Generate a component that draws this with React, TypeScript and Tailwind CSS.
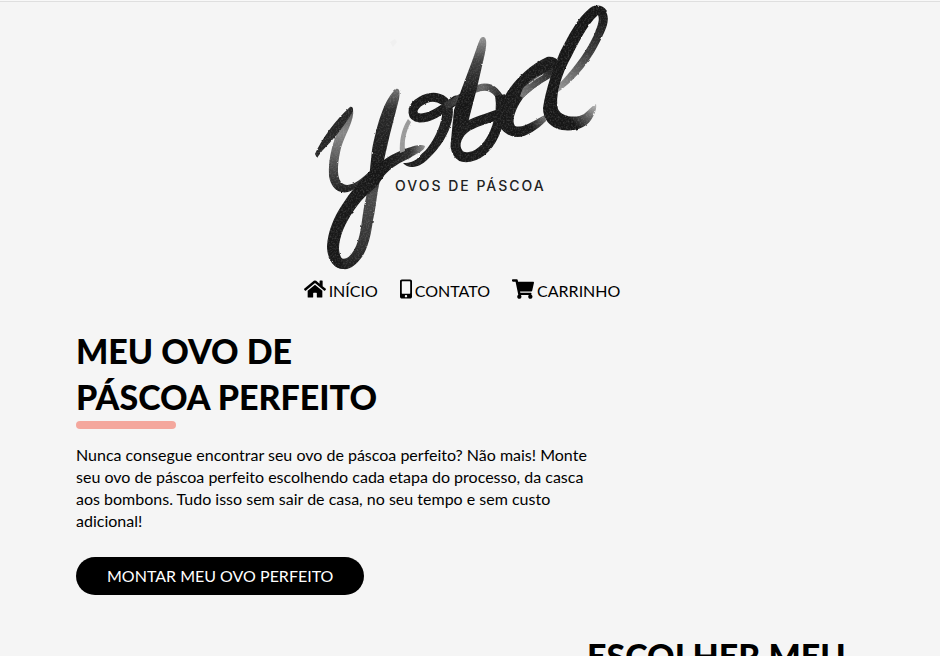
import { FaHome, FaMobileAlt, FaShoppingCart } from "react-icons/fa";

function Logo() {
  return (
    <svg viewBox="310 2 304 272" className="block h-[272px] w-[304px]" role="img" aria-label="Yobel ovos de páscoa">
      <defs>
        <filter id="brush" x="-5%" y="-5%" width="110%" height="110%" colorInterpolationFilters="sRGB">
          <feTurbulence type="fractalNoise" baseFrequency="0.25" numOctaves="2" seed="4" result="noise" />
          <feDisplacementMap in="SourceGraphic" in2="noise" scale="2" xChannelSelector="R" yChannelSelector="G" result="rough" />
          <feTurbulence type="fractalNoise" baseFrequency="0.6" numOctaves="2" seed="9" />
          <feColorMatrix type="matrix" values="0 0 0 0 0.8  0 0 0 0 0.8  0 0 0 0 0.8  0.5 0 0 0 -0.22" result="grain" />
          <feComposite in="grain" in2="rough" operator="atop" />
        </filter>
        <linearGradient id="hook" x1="0" y1="108" x2="0" y2="192" gradientUnits="userSpaceOnUse">
          <stop offset="0" stopColor="#555" />
          <stop offset="0.3" stopColor="#888" />
          <stop offset="0.7" stopColor="#4a4a4a" />
          <stop offset="1" stopColor="#1c1c1c" />
        </linearGradient>
        <linearGradient id="stem" x1="0" y1="88" x2="0" y2="270" gradientUnits="userSpaceOnUse">
          <stop offset="0" stopColor="#777" />
          <stop offset="0.12" stopColor="#2a2a2a" />
          <stop offset="0.45" stopColor="#161616" />
          <stop offset="0.58" stopColor="#4c4c4c" />
          <stop offset="0.85" stopColor="#333" />
          <stop offset="1" stopColor="#1c1c1c" />
        </linearGradient>
        <linearGradient id="sweep" x1="385" y1="0" x2="426" y2="0" gradientUnits="userSpaceOnUse">
          <stop offset="0" stopColor="#161616" />
          <stop offset="0.6" stopColor="#2c2c2c" />
          <stop offset="1" stopColor="#999" />
        </linearGradient>
        <linearGradient id="bstem" x1="0" y1="36" x2="0" y2="95" gradientUnits="userSpaceOnUse">
          <stop offset="0" stopColor="#999" />
          <stop offset="0.4" stopColor="#444" />
          <stop offset="1" stopColor="#161616" />
        </linearGradient>
        <linearGradient id="btop" x1="450" y1="0" x2="504" y2="0" gradientUnits="userSpaceOnUse">
          <stop offset="0" stopColor="#333" />
          <stop offset="0.6" stopColor="#666" />
          <stop offset="1" stopColor="#1c1c1c" />
        </linearGradient>
        <radialGradient id="abody" cx="546" cy="117" r="18" gradientUnits="userSpaceOnUse">
          <stop offset="0" stopColor="#777" />
          <stop offset="1" stopColor="#181818" />
        </radialGradient>
        <linearGradient id="ainner" x1="523" y1="96" x2="552" y2="72" gradientUnits="userSpaceOnUse">
          <stop offset="0" stopColor="#777" />
          <stop offset="1" stopColor="#262626" />
        </linearGradient>
        <linearGradient id="lback" x1="604" y1="15" x2="558" y2="92" gradientUnits="userSpaceOnUse">
          <stop offset="0" stopColor="#181818" />
          <stop offset="0.45" stopColor="#3c3c3c" />
          <stop offset="1" stopColor="#999" />
        </linearGradient>
        <radialGradient id="lmain" cx="598" cy="103" r="32" gradientUnits="userSpaceOnUse">
          <stop offset="0" stopColor="#ccc" />
          <stop offset="0.5" stopColor="#666" />
          <stop offset="1" stopColor="#161616" />
        </radialGradient>
      </defs>
      <path d="M390 42l5-3 2 3-4 5z" fill="#f0f0f0" />
      <g filter="url(#brush)">
        <path d="M353 109C355 120 345 134 341 148C338 160 336 176 341 182C348 190 360 180 369 172C364 183 355 190 348 192C338 194 331 188 329 176C328 158 333 136 346 116Z" fill="url(#hook)" />
        <path d="M350 107C353 106 354 110 352 113C343 128 332 141 322 151L317 158L315 154C321 140 336 119 350 107Z" fill="#252525" />
        <path d="M396 89C400 88 400 93 399 99L390 134L384 160L378 190C376 202 375 212 373 220C371 235 368 248 362 257C356 265 350 270 343 269C337 269 333 265 330 260L337 255C344 263 350 257 354 250C361 238 361 224 364 207L368 188L372 150C377 125 384 99 396 89Z" fill="url(#stem)" />
        <path d="M343 269C333 268 327 258 327 246C328 231 334 217 342 205C350 192 360 181 371 170L384 160L384 176C377 188 370 191 361 201C352 212 343 226 340 240C338 249 339 255 343 260Z" fill="#181818" />
        <path d="M370 172C380 162 388 156 400 151C410 147 420 143 425 146C425 151 415 154 410 158C400 163 392 166 382 178L374 188Z" fill="url(#sweep)" />
        <path d="M408 119C402 128 399 140 400 153L405 151C404 140 406 131 411 122Z" fill="#999" />
        <path d="M456 100C444 108 432 118 420 118C411 117 411 109 418 103C426 97 436 95 444 101" fill="none" stroke="#181818" strokeWidth="9" strokeLinecap="round" />
        <path d="M442 97C454 98 454 112 452 120C449 134 440 148 428 159C418 169 408 169 403 163C418 163 419 155 425 151C433 142 440 128 442 116Z" fill="#1c1c1c" />
        <path d="M445 106C459 101 466 91 479 88C493 84 501 95 502 107" fill="none" stroke="url(#btop)" strokeWidth="7" />
        <path d="M483 37C488 37 486 48 485 53L477 88L471 111L466 131L457 148L451 140L454 110C461 90 471 65 477 47C479 42 480 37 483 37Z" fill="url(#bstem)" />
        <path d="M500 95C504 118 493 140 485 148C476 158 462 160 458 153C452 144 458 132 468 126C480 119 492 118 506 111" fill="none" stroke="#181818" strokeWidth="10" />
        <path d="M501 104C508 86 527 66 547 57C552 56 557 58 560 62L556 74C545 80 530 90 523 98C516 108 511 120 515 126C524 129 536 119 545 115L546 121C538 129 527 137 517 137C508 136 502 132 499 124Z" fill="url(#abody)" />
        <path d="M554 69C542 72 532 79 523 88L520 96L523 98C531 90 544 81 554 76Z" fill="url(#ainner)" />
        <path d="M529 84Q536 78 544 74" fill="none" stroke="#ccc" strokeWidth="1" />
        <path d="M602 8C612 14 607 27 603 35C593 58 576 80 558 92L560 83C577 65 588 48 594 35C598 25 600 20 598 15Z" fill="url(#lback)" />
        <path d="M607 11C603 5 596 4 590 8C577 18 568 37 560 52C553 69 546 88 543 108C543 119 550 128 562 130C576 132 586 127 591 120C595 114 597 108 596 104C592 106 589 110 584 114C578 118 562 118 558 109C555 98 560 79 568 63C577 46 587 24 598 15C602 14 605 14 607 11Z" fill="url(#lmain)" />
      </g>
      <text x="395" y="191" fill="#222" className="font-['Inter',sans-serif] text-[14px] font-medium tracking-[2px]">
        OVOS DE PÁSCOA
      </text>
    </svg>
  );
}

const links = [
  { label: "INÍCIO", icon: <FaHome className="h-5 w-[22px]" /> },
  { label: "CONTATO", icon: <FaMobileAlt className="h-5 w-3" /> },
  { label: "CARRINHO", icon: <FaShoppingCart className="h-5 w-[22px]" /> },
];

export default function App() {
  return (
    <div className="h-screen overflow-hidden border-t border-[#f8f8f8] bg-[#f5f5f5] font-['Lato','Noto_Sans',sans-serif] text-base text-black">
      <header className="flex flex-col items-center border-t border-[#dfdfdf] pr-4">
        <Logo />
        <nav className="mt-1 flex gap-[22px]">
          {links.map((link) => (
            <a key={link.label} href="#" className="flex items-start gap-[3px] leading-[25px]">
              <span className="pt-px">{link.icon}</span>
              {link.label}
            </a>
          ))}
        </nav>
      </header>
      <main className="px-[76px] pt-[25px]">
        <section className="max-w-[524px]">
          <h1 className="text-[34px] leading-[46px] font-black">
            MEU OVO DE
            <br />
            PÁSCOA PERFEITO
          </h1>
          <div className="mt-px h-2 w-[100px] rounded-full bg-[#f4a79d]" />
          <p className="mt-[15px] leading-[22px]">
            Nunca consegue encontrar seu ovo de páscoa perfeito? Não mais! Monte seu ovo de páscoa perfeito escolhendo
            cada etapa do processo, da casca aos bombons. Tudo isso sem sair de casa, no seu tempo e sem custo adicional!
          </p>
          <button className="mt-[25px] h-[38px] rounded-full bg-black px-[31px] text-white">MONTAR MEU OVO PERFEITO</button>
        </section>
        <section className="mt-[38px] flex justify-end">
          <h2 className="w-[277px] text-[34px] leading-[46px] font-black">ESCOLHER MEU</h2>
        </section>
      </main>
    </div>
  );
}
